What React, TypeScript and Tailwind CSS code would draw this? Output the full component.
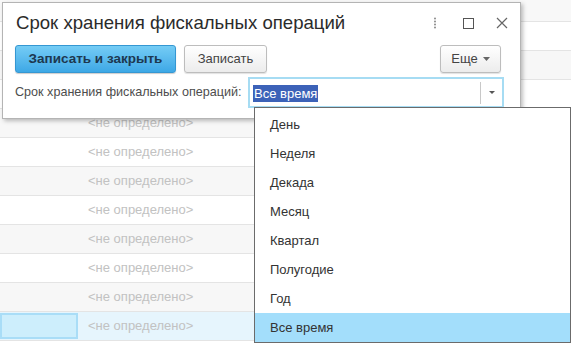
import React from "react";

const rows = Array.from({ length: 11 }, (_, i) => i);
const periods = ["День", "Неделя", "Декада", "Месяц", "Квартал", "Полугодие", "Год", "Все время"];

const App: React.FC = () => {
  return (
    <div
      className="relative w-[571px] h-[343px] overflow-hidden bg-white"
      style={{ fontFamily: '"Liberation Sans", Arial, sans-serif' }}
    >
      {/* Background list */}
      <div className="flex flex-col">
        <div className="h-[22px] border-b border-[#e4e4e4] bg-[#f8f8f8]" />
        {rows.map((i) => {
          const selected = i === 10;
          return (
            <div
              key={i}
              className={`flex h-[29px] border-b border-[#e4e4e4] ${
                selected ? "bg-[#e6f5fd]" : i % 2 === 0 ? "bg-white" : "bg-[#f7f7f7]"
              }`}
            >
              <div
                className={`w-[78px] shrink-0 ${
                  selected ? "bg-[#cdeefc] border-2 border-[#a9ddf7] my-[1px]" : ""
                }`}
              />
              {i >= 3 && (
                <div className="pl-[10px] flex items-center text-[13px] text-[#c2c2c2]">
                  &lt;не определено&gt;
                </div>
              )}
            </div>
          );
        })}
      </div>

      {/* Dialog */}
      <div className="absolute left-[2px] top-[2px] w-[519px] h-[117px] bg-white border border-[#b4b4b4] shadow-[2px_2px_4px_rgba(0,0,0,0.25)]">
        <div className="flex items-center h-[40px] pl-[13px] pr-[12px]">
          <div className="text-[18.6px] text-[#2b2b2b] flex-1 whitespace-nowrap">
            Срок хранения фискальных операций
          </div>
          <div className="flex items-center gap-[20px]">
            <svg width="4" height="12" viewBox="0 0 4 12">
              <circle cx="2" cy="1.5" r="1" fill="#8a8a8a" />
              <circle cx="2" cy="4.5" r="1" fill="#8a8a8a" />
              <circle cx="2" cy="7.5" r="1" fill="#8a8a8a" />
              <circle cx="2" cy="10.5" r="1" fill="#8a8a8a" />
            </svg>
            <svg width="11" height="11" viewBox="0 0 11 11" className="ml-[6px]">
              <rect x="0.5" y="0.5" width="10" height="10" fill="none" stroke="#555" strokeWidth="1" />
            </svg>
            <svg width="12" height="12" viewBox="0 0 12 12" className="ml-[2px]">
              <path d="M1 1 L11 11 M11 1 L1 11" stroke="#666" strokeWidth="1.2" />
            </svg>
          </div>
        </div>

        <div className="flex items-center pl-[12px] pr-[19px] mt-[2px]">
          <button className="h-[28px] w-[161px] rounded-[3px] border border-[#3597d2] bg-gradient-to-b from-[#74ccf5] to-[#3da8e6] text-[13.5px] font-bold text-[#1d3850] shadow-[0_1px_1px_rgba(0,0,0,0.2)]">
            Записать и закрыть
          </button>
          <button className="ml-[8px] h-[28px] w-[83px] rounded-[3px] border border-[#bdbdbd] bg-gradient-to-b from-white to-[#ececec] text-[13px] text-[#444] shadow-[0_1px_1px_rgba(0,0,0,0.12)]">
            Записать
          </button>
          <div className="flex-1" />
          <button className="h-[28px] w-[61px] rounded-[3px] border border-[#bdbdbd] bg-gradient-to-b from-white to-[#ececec] text-[13px] text-[#444] flex items-center justify-center gap-[5px] shadow-[0_1px_1px_rgba(0,0,0,0.12)]">
            Еще
            <svg width="7" height="4" viewBox="0 0 7 4">
              <path d="M0 0 H7 L3.5 4 Z" fill="#666" />
            </svg>
          </button>
        </div>

        <div className="flex items-center pl-[12px] mt-[4px]">
          <div className="text-[12.6px] text-[#4d4d4d] w-[233px] whitespace-nowrap">
            Срок хранения фискальных операций:
          </div>
          <div className="h-[31px] w-[256px] border-2 border-[#a6dcf3] flex items-center bg-white">
            <div className="flex-1 pl-[3px]">
              <span className="bg-[#3c62b8] text-white text-[13px] px-[1px] py-[1px]">Все время</span>
            </div>
            <div className="w-[22px] h-[22px] border-l border-[#c8c8c8] flex items-center justify-center">
              <svg width="6" height="3" viewBox="0 0 6 3">
                <path d="M0 0 H6 L3 3 Z" fill="#555" />
              </svg>
            </div>
          </div>
        </div>
      </div>

      {/* Dropdown list */}
      <div className="absolute left-[254px] top-[107px] w-[317px] bg-white border border-[#6b6b6b] pt-[2px]">
        {periods.map((p) => (
          <div
            key={p}
            className={`h-[29px] flex items-center pl-[15px] text-[13px] text-[#333] ${
              p === "Все время" ? "bg-[#a3defb]" : ""
            }`}
          >
            {p}
          </div>
        ))}
      </div>
    </div>
  );
};

export default App;
